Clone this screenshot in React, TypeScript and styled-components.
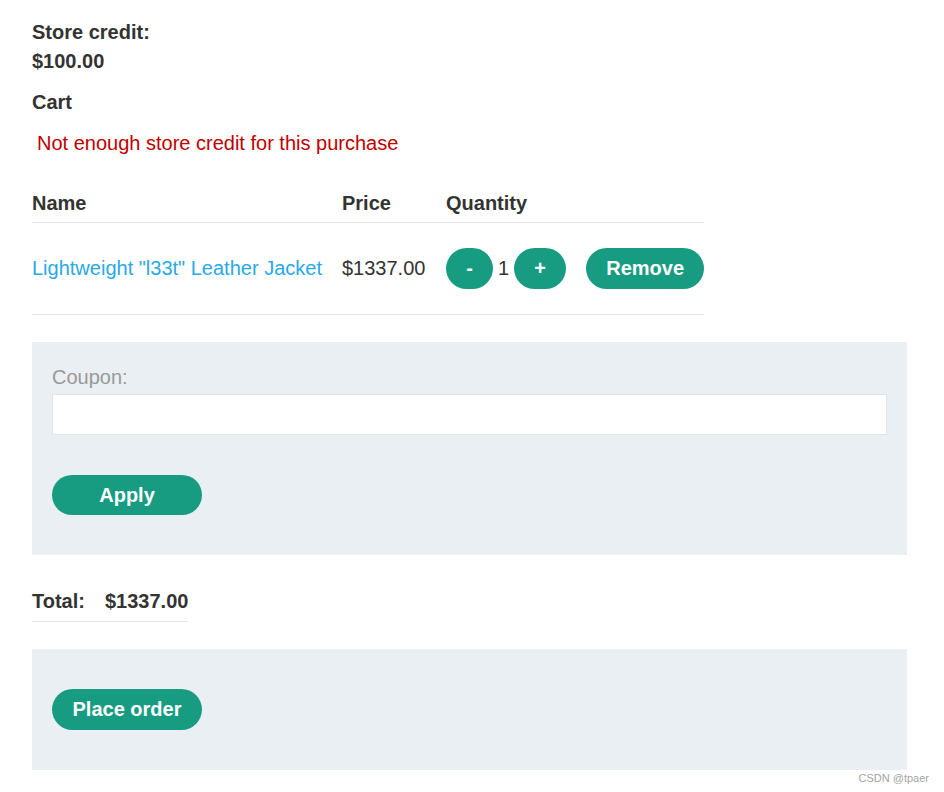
import styled, { createGlobalStyle } from 'styled-components';

const GlobalStyle = createGlobalStyle`
	body {
		margin: 0;
		background: #fff;
		font-family: "Liberation Sans", Arial, sans-serif;
		color: #333332;
	}
`;

const Page = styled.div`
	position: relative;
	padding: 18px 37px 22px 32px;
	min-height: 792px;
	box-sizing: border-box;
`;

const Credit = styled.p`
	margin: 0;
	width: 150px;
	font-size: 20px;
	font-weight: 700;
	line-height: 29px;
`;

const Heading = styled.p`
	margin: 12px 0 0;
	font-size: 20px;
	font-weight: 700;
	line-height: 29px;
`;

const ErrorText = styled.p`
	margin: 12px 0 0;
	padding-left: 5px;
	font-size: 20px;
	line-height: 29px;
	color: #c00000;
`;

const Table = styled.table`
	margin-top: 31px;
	border-collapse: collapse;
	font-size: 20px;
`;

const Th = styled.th<{ $w?: number }>`
	text-align: left;
	font-weight: 700;
	padding: 0 0 4px;
	height: 29px;
	width: ${(p) => (p.$w ? `${p.$w}px` : 'auto')};
	border-bottom: 1px solid #e6e6e6;
	line-height: 29px;
`;

const Td = styled.td`
	height: 91px;
	padding: 0;
	vertical-align: middle;
	border-bottom: 1px solid #e6e6e6;
	white-space: nowrap;
`;

const Link = styled.a`
	color: #29a9e5;
	text-decoration: none;
`;

const QtyCell = styled.div`
	display: flex;
	align-items: center;
`;

const Qty = styled.span`
	margin: 0 5px;
`;

const Button = styled.button<{ $w?: number; $h?: number }>`
	height: ${(p) => p.$h ?? 41}px;
	width: ${(p) => (p.$w ? `${p.$w}px` : 'auto')};
	padding: 0;
	border: 0;
	border-radius: 25px;
	background: #189c81;
	color: #fff;
	font-family: "Liberation Sans", Arial, sans-serif;
	font-size: 20px;
	font-weight: 700;
	cursor: pointer;
`;

const RemoveButton = styled(Button)`
	margin-left: 20px;
`;

const Panel = styled.div<{ $pad: string; $top?: number }>`
	background: #e9eff2;
	padding: ${(p) => p.$pad};
	margin-top: ${(p) => p.$top ?? 0}px;
`;

const Label = styled.label`
	display: block;
	font-size: 20px;
	color: #999;
	line-height: 29px;
`;

const Input = styled.input`
	display: block;
	width: 100%;
	box-sizing: border-box;
	height: 41px;
	margin: 2px 0 40px;
	border: 1px solid #e3e3e3;
	background: #fff;
	font-size: 18px;
	outline: none;
`;

const TotalRow = styled.div`
	display: inline-flex;
	gap: 20px;
	margin: 35px 0 27px;
	padding-bottom: 9px;
	border-bottom: 1px solid #e6e6e6;
	font-size: 20px;
	font-weight: 700;
	line-height: 22px;
	width: 156px;
`;

const Watermark = styled.span`
	position: absolute;
	right: 15px;
	bottom: 8px;
	font-size: 11px;
	color: #a3a3a3;
`;

export default function App() {
	return (
		<>
			<GlobalStyle />
			<Page>
				<Credit>Store credit: $100.00</Credit>
				<Heading>Cart</Heading>
				<ErrorText>Not enough store credit for this purchase</ErrorText>
				<Table>
					<thead>
						<tr>
							<Th $w={310}>Name</Th>
							<Th $w={104}>Price</Th>
							<Th $w={258}>Quantity</Th>
						</tr>
					</thead>
					<tbody>
						<tr>
							<Td>
								<Link href="#">Lightweight "l33t" Leather Jacket</Link>
							</Td>
							<Td>$1337.00</Td>
							<Td>
								<QtyCell>
									<Button $w={47}>-</Button>
									<Qty>1</Qty>
									<Button $w={52}>+</Button>
									<RemoveButton $w={118}>Remove</RemoveButton>
								</QtyCell>
							</Td>
						</tr>
					</tbody>
				</Table>
				<Panel $pad="21px 20px 40px" $top={27}>
					<Label>Coupon:</Label>
					<Input />
					<Button $w={150} $h={40}>Apply</Button>
				</Panel>
				<TotalRow>
					<span>Total:</span>
					<span>$1337.00</span>
				</TotalRow>
				<Panel $pad="40px 20px">
					<Button $w={150}>Place order</Button>
				</Panel>
				<Watermark>CSDN @tpaer</Watermark>
			</Page>
		</>
	);
}
